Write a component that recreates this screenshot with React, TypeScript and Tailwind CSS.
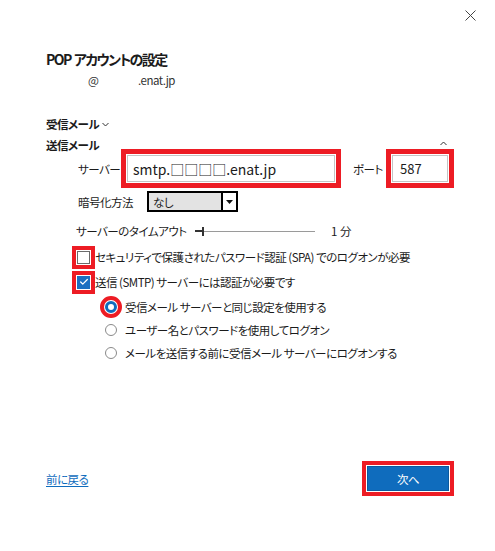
import { Check } from 'lucide-react'

const mark = 'outline-solid outline-[#ed1c24] outline-offset-1'

function Chevron({ up }: { up?: boolean }) {
  return (
    <svg width="7" height="5" viewBox="0 0 7 5" className="shrink-0">
      <path d={up ? 'M0.5 4 L3.5 1 L6.5 4' : 'M0.5 1 L3.5 4 L6.5 1'} fill="none" stroke="#333" strokeWidth="1" />
    </svg>
  )
}

function CheckRow({ checked, label }: { checked?: boolean; label: string }) {
  return (
    <div className="flex h-4 items-center pl-[31px]">
      <div
        className={
          checked
            ? `flex h-[13px] w-[13px] items-center justify-center bg-[#1a6fc1] outline-[length:4px] ${mark}`
            : `h-[13px] w-[13px] border border-[#6b6b6b] bg-white outline-[length:4px] ${mark}`
        }
      >
        {checked && <Check size={10} strokeWidth={3} color="#fff" />}
      </div>
      <span className="ml-[5px] whitespace-nowrap">{label}</span>
    </div>
  )
}

function RadioRow({ selected, label }: { selected?: boolean; label: string }) {
  return (
    <div className="flex h-4 items-center pl-[59px]">
      {selected ? (
        <div className={`h-[12px] w-[12px] rounded-full border-[3px] border-[#0f6cbd] bg-white outline-[length:4px] ${mark}`} />
      ) : (
        <div className="h-[12px] w-[12px] rounded-full border border-[#8a8a8a] bg-white" />
      )}
      <span className="ml-[8px] whitespace-nowrap">{label}</span>
    </div>
  )
}

export default function App() {
  return (
    <div className="h-[551px] w-[495px] bg-white font-['Noto_Sans_CJK_JP',sans-serif] text-[11.5px] leading-4 tracking-[-0.5px] text-[#1b1b1b] [font-feature-settings:'palt']">
      <div className="flex justify-end pt-[10px] pr-[19px]">
        <svg width="11" height="11" viewBox="0 0 11 11">
          <path d="M0.5 0.5 L10.5 10.5 M10.5 0.5 L0.5 10.5" stroke="#444" strokeWidth="1" />
        </svg>
      </div>

      <div className="px-[46px]">
        <h1 className="mt-[28px] h-5 text-[14px] leading-5 font-bold tracking-[-1.6px] text-[#1b1b1b]">
          POP&nbsp; アカウントの設定
        </h1>
        <div className="mt-[3px] flex h-4 items-center pl-[42px] text-[#333]">
          <span className="w-[50px]">@</span>
          <span>.enat.jp</span>
        </div>

        <div className="mt-[28px] flex h-4 items-center gap-[3px] font-bold">
          <span>受信メール</span>
          <Chevron />
        </div>
        <div className="mt-[5px] flex h-4 items-center justify-between font-bold">
          <span>送信メール</span>
          <span className="-mt-[4px] pr-[2px]">
            <Chevron up />
          </span>
        </div>
      </div>

      <div className="flex flex-col pl-[46px]">
        <div className="mt-[2px] flex h-[27px] items-center pl-[32px]">
          <span className="w-[49px] whitespace-nowrap">サーバー</span>
          <div className={`flex h-[27px] w-[208px] items-center border border-[#c4c4c4] pl-[5px] text-[14px] tracking-normal outline-[length:5px] ${mark}`}>
            smtp.□□□□.enat.jp
          </div>
          <span className="ml-[18px] w-[39px] whitespace-nowrap">ポート</span>
          <div className={`flex h-[27px] w-[56px] items-center border border-[#c4c4c4] pl-[7px] text-[13px] tracking-normal outline-[length:5px] ${mark}`}>
            587
          </div>
        </div>

        <div className="mt-[9px] flex h-[21px] items-center pl-[32px]">
          <span className="w-[69px] whitespace-nowrap">暗号化方法</span>
          <div className="flex h-[21px] w-[91px] border-2 border-black">
            <div className="flex flex-1 items-center bg-[#e3e3e3] pl-[4px]">なし</div>
            <div className="flex w-[15px] items-center justify-center border-l-2 border-black bg-white">
              <svg width="7" height="4" viewBox="0 0 7 4">
                <path d="M0 0 H7 L3.5 4 Z" fill="#111" />
              </svg>
            </div>
          </div>
        </div>

        <div className="mt-[11px] flex h-4 items-center pl-[30px]">
          <span className="w-[119px] whitespace-nowrap">サーバーのタイムアウト</span>
          <div className="flex h-[12px] w-[120px] items-center">
            <div className="h-[2px] w-[7px] bg-[#333]" />
            <div className="h-[9px] w-[2px] bg-[#333]" />
            <div className="h-px flex-1 bg-[#9a9a9a]" />
          </div>
          <span className="ml-[16px] tracking-normal">1 分</span>
        </div>

        <div className="mt-[10px]">
          <CheckRow label="セキュリティで保護されたパスワード認証 (SPA) でのログオンが必要" />
        </div>
        <div className="mt-[9px]">
          <CheckRow checked label="送信 (SMTP) サーバーには認証が必要です" />
        </div>
        <div className="mt-[9px]">
          <RadioRow selected label="受信メール サーバーと同じ設定を使用する" />
        </div>
        <div className="mt-[7px]">
          <RadioRow label="ユーザー名とパスワードを使用してログオン" />
        </div>
        <div className="mt-[7px]">
          <RadioRow label="メールを送信する前に受信メール サーバーにログオンする" />
        </div>
      </div>

      <div className="mt-[105px] flex h-[25px] items-center justify-between px-[46px]">
        <a className="text-[#0f6cbd] underline underline-offset-2">前に戻る</a>
        <button
          className={`flex h-[25px] w-[82px] items-center justify-center border border-[#0b5a9e] bg-[#0f6cbd] text-white outline-[length:4px] ${mark}`}
        >
          次へ
        </button>
      </div>
    </div>
  )
}
